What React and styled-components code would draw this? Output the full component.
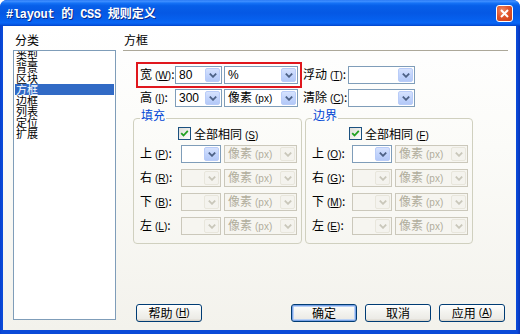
import React from "react";
import styled, { createGlobalStyle } from "styled-components";

const GlobalStyle = createGlobalStyle`
  html, body {
    margin: 0;
    padding: 0;
    background: #ffffff;
  }
  body {
    width: 520px;
    height: 334px;
    overflow: hidden;
    font-family: "Noto Sans CJK SC", "Liberation Sans", sans-serif;
    font-size: 12px;
    color: #000;
  }
`;

const Window = styled.div`
  width: 520px;
  height: 334px;
  display: flex;
  flex-direction: column;
  border-radius: 7px 7px 0 0;
  overflow: hidden;
  background: #0a46d8;
`;

const TitleBar = styled.div`
  height: 26px;
  flex: none;
  display: flex;
  align-items: center;
  padding: 0 7px 0 6px;
  background: linear-gradient(
    to bottom,
    #2d7cf5 0%,
    #3a8cff 6%,
    #1572f6 12%,
    #075fe9 22%,
    #0558e4 50%,
    #0660ee 75%,
    #0a66f4 88%,
    #0552df 96%,
    #0443c4 100%
  );
`;

const Title = styled.div`
  flex: 1;
  color: #fff;
  font-family: "Liberation Mono", monospace;
  font-weight: bold;
  font-size: 12px;
  letter-spacing: -0.3px;
  text-shadow: 1px 1px 0 #0a2a8a;
  white-space: pre;
`;

const TitleCjk = styled.span`
  font-family: "Noto Sans CJK SC", sans-serif;
  font-size: 12px;
  letter-spacing: 0;
`;

const CloseButton = styled.div`
  width: 17px;
  height: 17px;
  margin-top: 1px;
  box-sizing: border-box;
  border: 1px solid #fff;
  border-radius: 3px;
  background: radial-gradient(circle at 35% 30%, #f08a66 0%, #e0552c 45%, #c83c16 100%);
  display: flex;
  align-items: center;
  justify-content: center;
`;

const Frame = styled.div`
  flex: 1;
  display: flex;
  padding: 0 4px 4px 3px;
  background: linear-gradient(to right, #0840cf, #0a4ad8 2px, #0a4ad8 calc(100% - 3px), #0733b8);
  min-height: 0;
`;

const Body = styled.div`
  flex: 1;
  display: flex;
  gap: 7px;
  padding: 7px 8px 8px 10px;
  background: linear-gradient(to bottom, #ffffff 0%, #fbfbf8 40%, #f3f2ec 100%);
`;

const LeftColumn = styled.div`
  width: 103px;
  display: flex;
  flex-direction: column;
`;

const Caption = styled.div`
  line-height: 14px;
  padding-left: ${(p) => p.$indent || 0}px;
  margin-bottom: 3px;
`;

const CategoryList = styled.div`
  flex: 1;
  margin-bottom: 2px;
  border: 1px solid #7f9db9;
  background: #fff;
  padding: 0 1px;
`;

const CategoryItem = styled.div`
  font-size: 11px;
  line-height: 11px;
  height: 11px;
  padding-left: 1px;
  background: ${(p) => (p.$selected ? "#316ac5" : "transparent")};
  color: ${(p) => (p.$selected ? "#fff" : "#000")};
`;

const RightColumn = styled.div`
  flex: 1;
  display: flex;
  flex-direction: column;
`;

const Rule = styled.div`
  height: 1px;
  background: #aca899;
  margin-bottom: 15px;
`;

const Form = styled.div`
  padding-left: 10px;
  display: flex;
  flex-direction: column;
`;

const TopGrid = styled.div`
  position: relative;
  margin-left: 7px;
  display: grid;
  grid-template-columns: 35px 49px 79px 45px 67px;
  grid-auto-rows: 18px;
  row-gap: 5px;
  align-items: center;
`;

const Highlight = styled.div`
  position: absolute;
  left: -4px;
  top: -4px;
  width: 166px;
  height: 26px;
  box-sizing: border-box;
  border: 2px solid #e0171d;
  pointer-events: none;
`;

const Label = styled.div`
  width: ${(p) => p.$w || "auto"};
  white-space: nowrap;
  line-height: 18px;
  flex: none;
`;

const Mn = styled.span`
  font-size: 10px;
  font-family: "Liberation Sans", sans-serif;
  margin-left: 3px;
`;

const ComboBox = styled.div`
  width: ${(p) => p.$w}px;
  height: 18px;
  flex: none;
  box-sizing: border-box;
  border: 1px solid ${(p) => (p.$disabled ? "#cbc8bb" : "#7f9db9")};
  background: ${(p) => (p.$disabled ? "#f6f5f0" : "#fff")};
  display: flex;
  align-items: center;
`;

const ComboText = styled.span`
  flex: 1;
  min-width: 0;
  padding-left: 3px;
  font-size: 12px;
  line-height: 16px;
  white-space: nowrap;
  overflow: hidden;
  color: ${(p) => (p.$disabled ? "#b1ad9c" : "#000")};
  font-family: ${(p) => (p.$latin ? '"Liberation Sans", sans-serif' : "inherit")};
`;

const ArrowButton = styled.span`
  width: 15px;
  height: 14px;
  margin: 0 1px;
  flex: none;
  box-sizing: border-box;
  border-radius: 2px;
  border: 1px solid ${(p) => (p.$disabled ? "#e8e6dc" : "#b9ccf8")};
  background: ${(p) =>
    p.$disabled
      ? "#f4f3ee"
      : "linear-gradient(to bottom, #d6e2fd 0%, #c2d4fc 50%, #b4c9f7 100%)"};
  display: flex;
  align-items: center;
  justify-content: center;
`;

const Chevron = ({ disabled }) => (
  <svg width="8" height="5" viewBox="0 0 8 5">
    <path
      d="M0.8 0.6 L4 3.8 L7.2 0.6"
      fill="none"
      stroke={disabled ? "#c9c7ba" : "#4d6185"}
      strokeWidth="1.8"
    />
  </svg>
);

const Combo = ({ w, value, disabled, latin }) => (
  <ComboBox $w={w} $disabled={disabled}>
    <ComboText $disabled={disabled} $latin={latin}>
      {value}
    </ComboText>
    <ArrowButton $disabled={disabled}>
      <Chevron disabled={disabled} />
    </ArrowButton>
  </ComboBox>
);

const Groups = styled.div`
  display: flex;
  gap: 3px;
  margin-top: 2px;
`;

const Group = styled.fieldset`
  width: ${(p) => p.$w}px;
  margin: 0;
  padding: 0 4px 7px 6px;
  box-sizing: border-box;
  border: 1px solid #d0d0bf;
  border-radius: 4px;
  display: flex;
  flex-direction: column;
  gap: 4px;
`;

const Legend = styled.legend`
  padding: 0 1px 6px;
  line-height: 12px;
  color: #0046d5;
`;

const CheckRow = styled.div`
  height: 18px;
  margin-top: -3px;
  margin-bottom: -2px;
  padding-left: ${(p) => p.$indent}px;
  display: flex;
  align-items: center;
  gap: 3px;
`;

const CheckBox = styled.span`
  width: 13px;
  height: 13px;
  box-sizing: border-box;
  border: 1px solid #1c5180;
  background: linear-gradient(135deg, #dcdcd7 0%, #fff 100%);
  display: flex;
  align-items: center;
  justify-content: center;
`;

const FieldRow = styled.div`
  display: flex;
  align-items: center;
  gap: 3px;
`;

const ButtonRow = styled.div`
  margin-top: auto;
  padding: 0 3px 0 13px;
  display: flex;
  gap: 8px;
`;

const Spacer = styled.div`
  flex: 1;
`;

const PushButton = styled.div`
  width: 66px;
  height: 18px;
  box-sizing: border-box;
  border: 1px solid #003c74;
  border-radius: 3px;
  background: linear-gradient(to bottom, #ffffff 0%, #f4f4f0 40%, #ecebe6 85%, #d6d0c5 100%);
  box-shadow: ${(p) => (p.$default ? "inset 0 0 0 1px #7aa2e6, inset 0 0 0 2px #b9d1f5" : "none")};
  display: flex;
  align-items: center;
  justify-content: center;
  line-height: 16px;
  white-space: nowrap;
`;

const categories = ["类型", "背景", "区块", "方框", "边框", "列表", "定位", "扩展"];

const sides = [
  { pad: "上", padKey: "P", mar: "上", marKey: "O" },
  { pad: "右", padKey: "R", mar: "右", marKey: "G" },
  { pad: "下", padKey: "B", mar: "下", marKey: "M" },
  { pad: "左", padKey: "L", mar: "左", marKey: "E" },
];

const Key = ({ k }) => (
  <Mn>
    (<u>{k}</u>)
  </Mn>
);

const SideGroup = ({ title, checkKey, labelKey, letterKey, w, labelW }) => (
  <Group $w={w}>
    <Legend>{title}</Legend>
    <CheckRow $indent={labelW}>
      <CheckBox>
        <svg width="9" height="9" viewBox="0 0 9 9">
          <path d="M1.2 4.2 L3.5 6.5 L7.8 1.8" fill="none" stroke="#21a121" strokeWidth="1.8" />
        </svg>
      </CheckBox>
      <span>
        全部相同
        <Key k={checkKey} />
      </span>
    </CheckRow>
    {sides.map((s, i) => (
      <FieldRow key={i}>
        <Label $w={`${labelW}px`}>
          {s[labelKey]}
          <Key k={s[letterKey]} />:
        </Label>
        <Combo w={40} disabled={i > 0} />
        <Combo w={73} value={<>像素<Mn>(px)</Mn></>} disabled />
      </FieldRow>
    ))}
  </Group>
);

export default function App() {
  return (
    <>
      <GlobalStyle />
      <Window>
        <TitleBar>
          <Title>
            #layout <TitleCjk>的</TitleCjk> CSS <TitleCjk>规则定义</TitleCjk>
          </Title>
          <CloseButton>
            <svg width="9" height="9" viewBox="0 0 9 9">
              <path d="M1 1 L8 8 M8 1 L1 8" stroke="#fff" strokeWidth="2" />
            </svg>
          </CloseButton>
        </TitleBar>
        <Frame>
          <Body>
            <LeftColumn>
              <Caption $indent={2}>分类</Caption>
              <CategoryList>
                {categories.map((c) => (
                  <CategoryItem key={c} $selected={c === "方框"}>
                    {c}
                  </CategoryItem>
                ))}
              </CategoryList>
            </LeftColumn>
            <RightColumn>
              <Caption $indent={1}>方框</Caption>
              <Rule />
              <Form>
                <TopGrid>
                  <Label>
                    宽<Key k="W" />:
                  </Label>
                  <Combo w={47} value="80" latin />
                  <Combo w={74} value="%" latin />
                  <Label>
                    浮动<Key k="T" />:
                  </Label>
                  <Combo w={67} />
                  <Label>
                    高<Key k="I" />:
                  </Label>
                  <Combo w={47} value="300" latin />
                  <Combo w={74} value={<>像素<Mn>(px)</Mn></>} />
                  <Label>
                    清除<Key k="C" />:
                  </Label>
                  <Combo w={67} />
                  <Highlight />
                </TopGrid>
                <Groups>
                  <SideGroup title="填充" checkKey="S" labelKey="pad" letterKey="padKey" w={167} labelW={38} />
                  <SideGroup title="边界" checkKey="F" labelKey="mar" letterKey="marKey" w={165} labelW={37} />
                </Groups>
              </Form>
              <ButtonRow>
                <PushButton>
                  帮助<Key k="H" />
                </PushButton>
                <Spacer />
                <PushButton $default>确定</PushButton>
                <PushButton>取消</PushButton>
                <PushButton>
                  应用<Key k="A" />
                </PushButton>
              </ButtonRow>
            </RightColumn>
          </Body>
        </Frame>
      </Window>
    </>
  );
}
